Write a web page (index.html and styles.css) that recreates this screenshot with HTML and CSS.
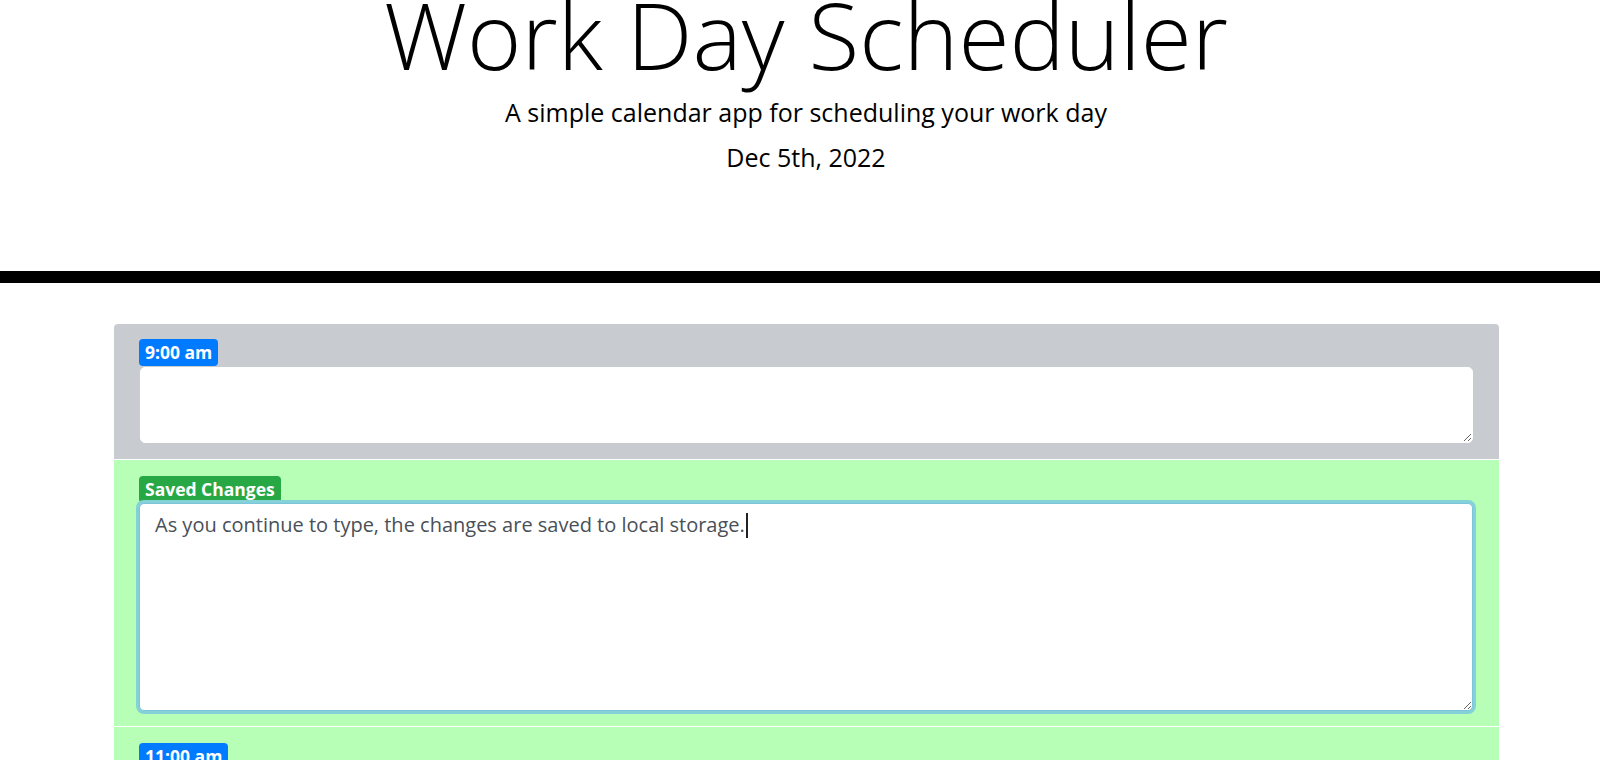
FILE: index.html
```html
<!DOCTYPE html>
<html lang="en">
<head>
<meta charset="utf-8">
<title>Work Day Scheduler</title>
<link rel="stylesheet" href="styles.css">
</head>
<body>
<header class="jumbotron">
  <h1 class="title">Work Day Scheduler</h1>
  <p class="lead">A simple calendar app for scheduling your work day</p>
  <p class="lead date">Dec 5th, 2022</p>
</header>
<main class="container">
  <section class="time-block past">
    <span class="hour">9:00 am</span>
    <div class="entry"></div>
  </section>
  <section class="time-block future tall">
    <span class="hour saved">Saved Changes</span>
    <div class="entry focused">As you continue to type, the changes are saved to local storage.<span class="caret"></span></div>
  </section>
  <section class="time-block future">
    <span class="hour">11:00 am</span>
    <div class="entry"></div>
  </section>
</main>
</body>
</html>
```

FILE: styles.css
```css
html, body {
  margin: 0;
  padding: 0;
  background: #ffffff;
  font-family: "Open Sans", "DejaVu Sans", sans-serif;
  color: #000000;
  overflow: hidden;
}

.jumbotron {
  text-align: center;
  padding: 0 0 96px 12px;
  border-bottom: 12px solid #000000;
}

.title {
  margin: -12px 0 0;
  font-size: 93px;
  font-weight: 300;
  line-height: 93px;
}

.lead {
  margin: 13px 0 0;
  font-size: 25px;
  font-weight: 400;
  line-height: 36px;
}

.lead.date {
  margin-top: 9px;
}

.container {
  width: 1385px;
  margin: 41px auto 0;
  padding-left: 13px;
  padding-right: 0;
}

.time-block {
  display: flex;
  flex-direction: column;
  align-items: flex-start;
  padding: 16px 26px 15px 25px;
  border-top: 1px solid #ffffff;
}

.time-block:first-child {
  padding: 15px 26px 16px 25px;
  border-top: none;
  border-radius: 4px 4px 0 0;
}

.past {
  background: #c8cbd0;
}

.future {
  background: #b7ffb6;
}

.hour {
  display: inline-block;
  height: 27px;
  line-height: 27px;
  padding: 0 6px;
  background: #007bff;
  color: #ffffff;
  font-size: 17.5px;
  font-weight: 700;
  border-radius: 4px;
}

.hour.saved {
  background: #28a745;
}

.entry {
  box-sizing: border-box;
  align-self: stretch;
  height: 76px;
  margin-top: 1px;
  margin-left: 1px;
  padding: 6px 15px;
  background: #ffffff;
  border-radius: 5px;
  border: 1px solid #ffffff;
  font-size: 20px;
  line-height: 30px;
  color: #495057;
  resize: vertical;
  overflow: auto;
}

.tall .entry {
  height: 208px;
  margin-top: 0;
  margin-left: 0;
}

.entry.focused {
  border-color: #7cc3dc;
  box-shadow: 0 0 0 3px #84d2d8;
}

.caret {
  display: inline-block;
  width: 2px;
  height: 25px;
  margin-left: 1px;
  vertical-align: -6px;
  background: #222222;
}
```
